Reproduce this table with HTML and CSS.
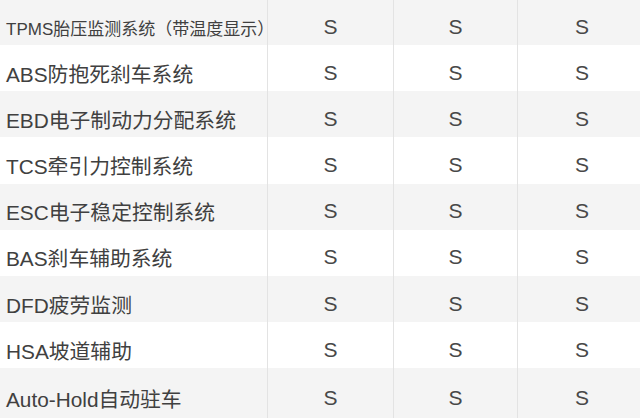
FILE: index.html
```html
<!DOCTYPE html>
<html lang="zh">
<head>
<meta charset="utf-8">
<link rel="stylesheet" href="styles.css">
</head>
<body>
<div class="table">
  <div class="row alt first"><div class="name small">TPMS胎压监测系统（带温度显示）</div><div class="val">S</div><div class="val">S</div><div class="val">S</div></div>
  <div class="row"><div class="name">ABS防抱死刹车系统</div><div class="val">S</div><div class="val">S</div><div class="val">S</div></div>
  <div class="row alt"><div class="name">EBD电子制动力分配系统</div><div class="val">S</div><div class="val">S</div><div class="val">S</div></div>
  <div class="row"><div class="name">TCS牵引力控制系统</div><div class="val">S</div><div class="val">S</div><div class="val">S</div></div>
  <div class="row alt"><div class="name">ESC电子稳定控制系统</div><div class="val">S</div><div class="val">S</div><div class="val">S</div></div>
  <div class="row"><div class="name">BAS刹车辅助系统</div><div class="val">S</div><div class="val">S</div><div class="val">S</div></div>
  <div class="row alt"><div class="name">DFD疲劳监测</div><div class="val">S</div><div class="val">S</div><div class="val">S</div></div>
  <div class="row"><div class="name">HSA坡道辅助</div><div class="val">S</div><div class="val">S</div><div class="val">S</div></div>
  <div class="row alt last"><div class="name">Auto-Hold自动驻车</div><div class="val">S</div><div class="val">S</div><div class="val">S</div></div>
</div>
</body>
</html>
```
FILE: styles.css
```css
html, body {
  margin: 0;
  padding: 0;
  background: #ffffff;
  overflow: hidden;
}
body {
  width: 640px;
  height: 418px;
  font-family: "Liberation Sans", "Noto Sans CJK SC", sans-serif;
  color: #404040;
}
.table {
  display: flex;
  flex-direction: column;
  width: 647px;
}
.row {
  display: grid;
  grid-template-columns: 268px 126px 124px 129px;
  height: 46.2px;
  background: #ffffff;
}
.row.alt {
  background: #f4f4f4;
}
.row.first {
  height: 45px;
}
.row.last {
  height: 50px;
}
.row > div {
  display: flex;
  align-items: center;
  padding-top: 9px;
  box-sizing: border-box;
  border-right: 1px solid #e3e3e3;
}
.name {
  padding-left: 6px;
  font-size: 20.8px;
  white-space: nowrap;
}
.name.small {
  font-size: 17px;
}
.val {
  justify-content: center;
  font-size: 21px;
  color: #484848;
}
```
